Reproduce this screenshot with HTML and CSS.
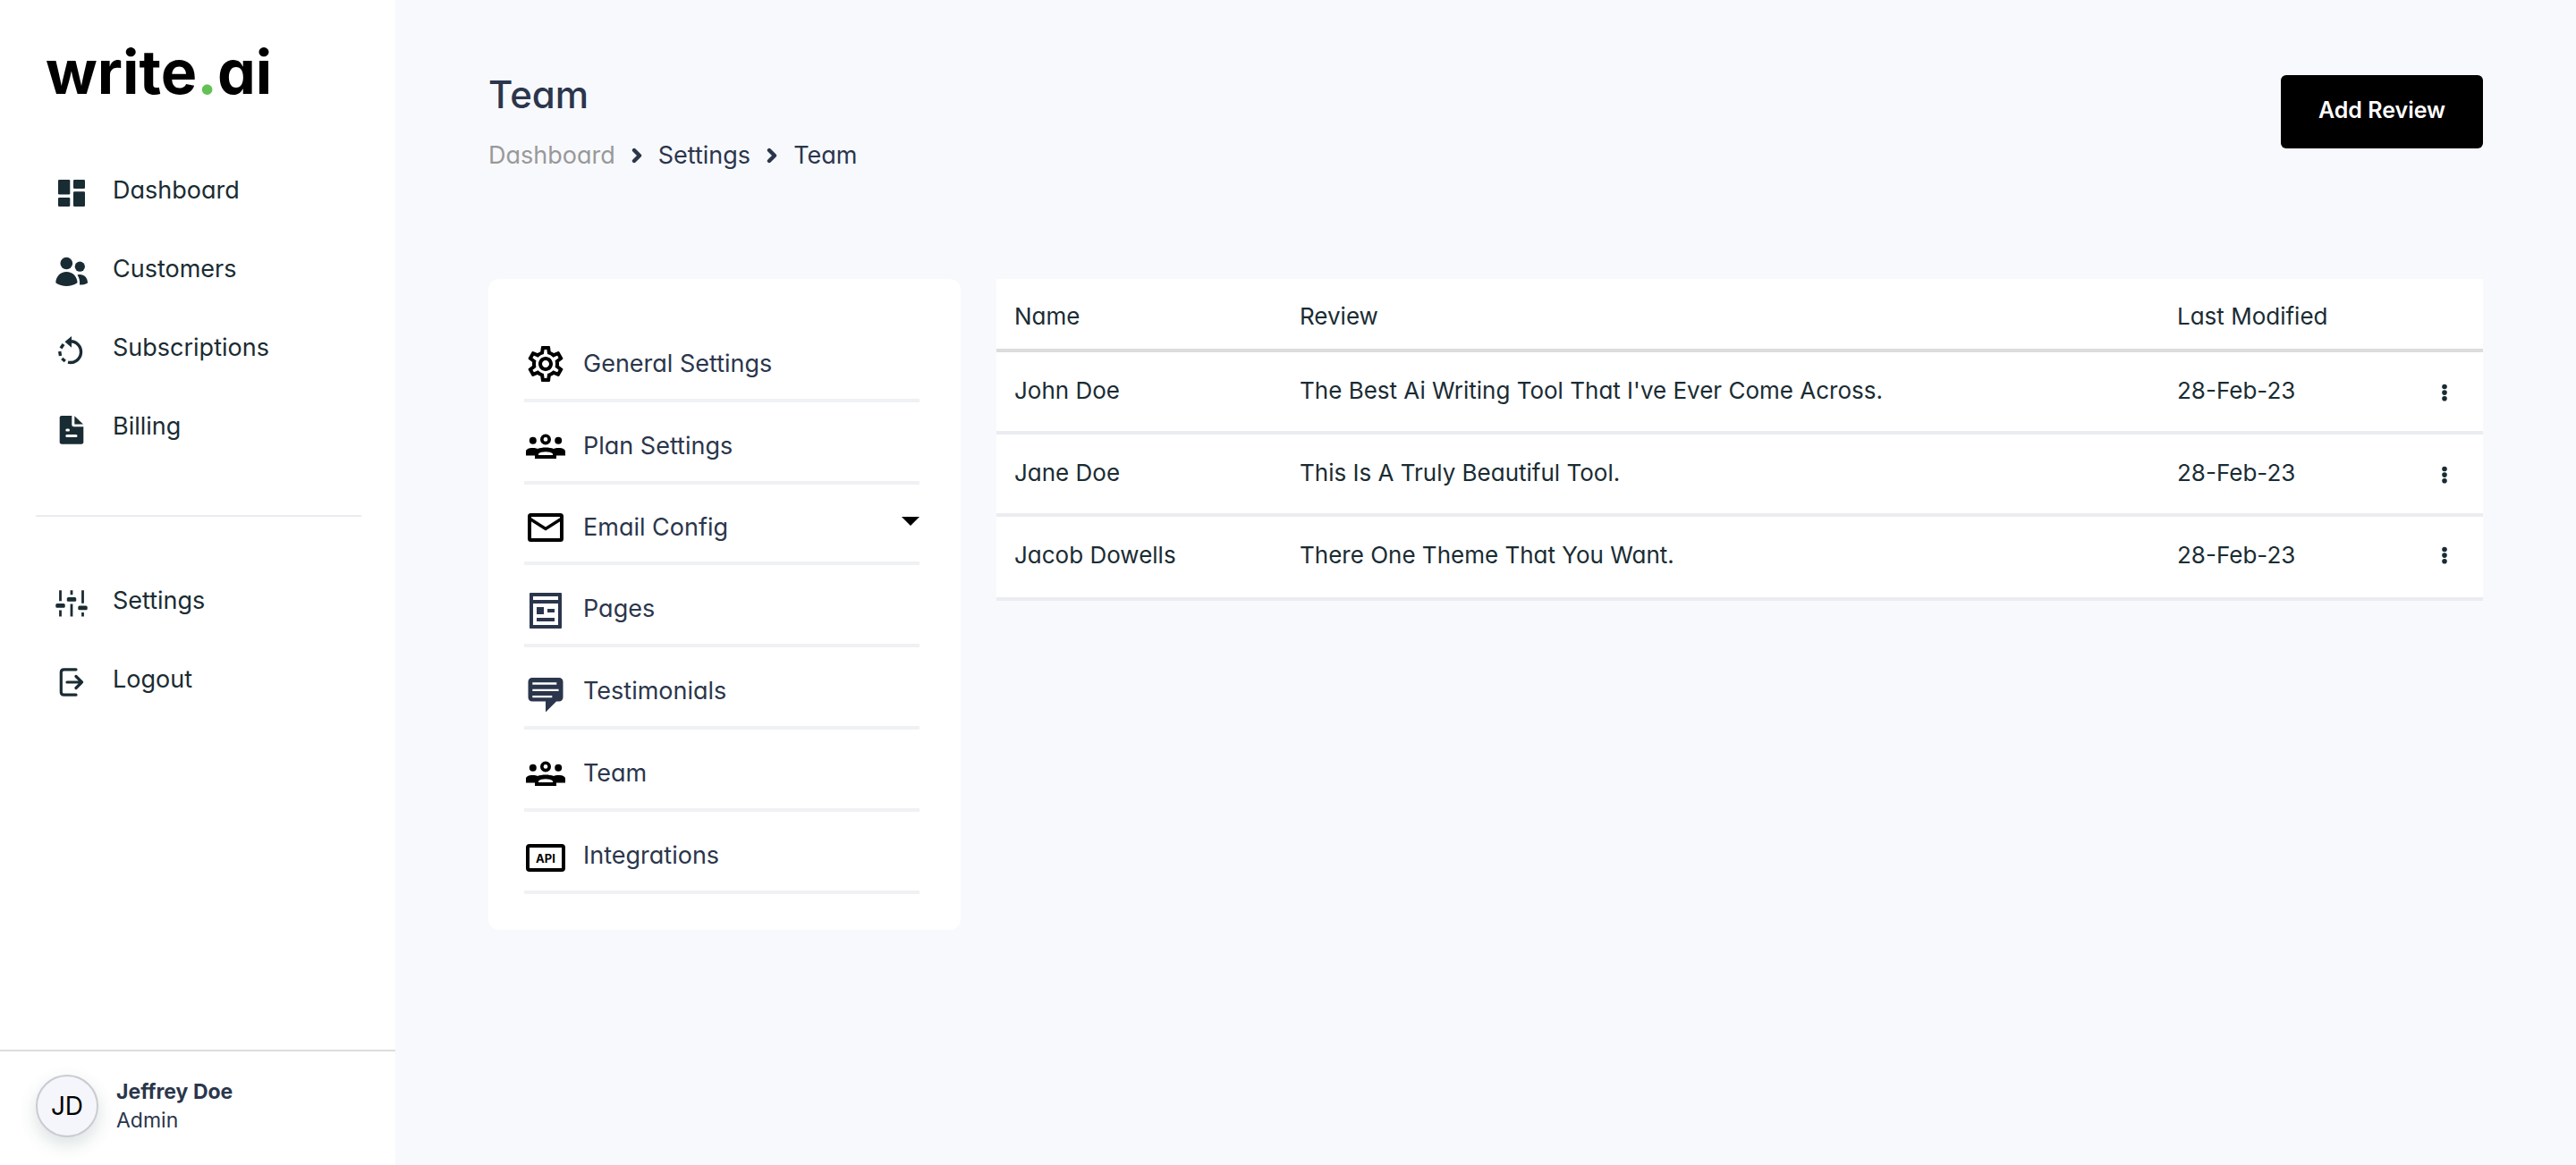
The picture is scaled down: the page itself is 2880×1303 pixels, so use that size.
FILE: index.html
```html
<!DOCTYPE html>
<html lang="en">
<head>
<meta charset="utf-8">
<meta name="viewport" content="width=device-width, initial-scale=1">
<title>Team - write.ai</title>
<link rel="stylesheet" href="styles.css">
</head>
<body>
<svg class="sprite" aria-hidden="true">
  <symbol id="groups" viewBox="0 0 48 48">
    <circle cx="9.8" cy="17.8" r="4"/><circle cx="38.2" cy="17.8" r="4"/>
    <circle cx="24" cy="16.4" r="4.2" fill="none" stroke="currentColor" stroke-width="3.6"/>
    <path fill-rule="evenodd" d="M2 34.5V30c0-2.500 3-4 7.500-4 2.500 0 4 .3 5.500 1 2.500-1 5.500-1.500 9-1.500s6.500.5 9 1.500c1.500-.7 3-1 5.500-1 4.500 0 7.500 1.500 7.500 4v4.500H36V38H12v-3.500zM16 34h16v-1.500c-1.500-1.600-4.500-2.300-8-2.300s-6.500.7-8 2.300z"/>
  </symbol>
  <symbol id="chevron" viewBox="0 0 12 18">
    <path d="M3 3l6 6-6 6" fill="none" stroke="currentColor" stroke-width="4.400" stroke-linecap="round" stroke-linejoin="round"/>
  </symbol>
  <symbol id="dots" viewBox="0 0 24 24">
    <circle cx="12" cy="5.500" r="2.800"/><circle cx="12" cy="12.100" r="2.800"/><circle cx="12" cy="18.700" r="2.800"/>
  </symbol>
</svg>

<aside class="sidebar">
  <a class="logo" href="#">write<span class="logo-dot">.</span>ai</a>
  <nav class="nav" aria-label="Main">
    <a class="nav-link" href="#">
      <svg class="nav-icon" viewBox="0 0 40 40" aria-hidden="true"><rect x="5" y="5" width="13.300" height="16.500" rx="1.200"/><rect x="5" y="25" width="13.300" height="10" rx="1.200"/><rect x="22" y="5" width="13" height="10" rx="1.200"/><rect x="22" y="18.300" width="13" height="16.700" rx="1.200"/></svg>
      Dashboard</a>
    <a class="nav-link" href="#">
      <svg class="nav-icon" viewBox="0 0 40 40" aria-hidden="true"><circle cx="14.300" cy="10.500" r="6.800"/><circle cx="29.300" cy="14.200" r="5.600"/><path d="M14.300 20C7.500 20 2.300 25.500 2.300 32.300 6 35 10 36 14.300 36s8.500-1 12.200-3.700C26.500 25.500 21.200 20 14.300 20z"/><path d="M26.500 23.500c6-1.800 11.500 2 11.500 9-2.500 1.600-5.500 2.100-9 2.100.4-4.300-.3-8-2.500-11.100z"/></svg>
      Customers</a>
    <a class="nav-link" href="#">
      <svg class="nav-icon" viewBox="0 0 40 40" aria-hidden="true"><path d="M12.500 10.200 20 4v12.800z"/><g fill="none" stroke="currentColor" stroke-width="3.400"><path d="M18.500 9.700A11.900 11.900 0 1 1 16 33.200"/><path d="M8 17.500l3-4.500M6.700 21l.8 5M9.300 29l3.500 3"/></g></svg>
      Subscriptions</a>
    <a class="nav-link" href="#">
      <svg class="nav-icon" viewBox="0 0 40 40" aria-hidden="true"><path fill-rule="evenodd" d="M9 5h11.300v10c0 1.300.8 2.200 2.200 2.200h10.800v17.300c0 1.300-.9 2.200-2.200 2.200H9c-1.400 0-2.300-.9-2.300-2.200V7.200C6.700 5.900 7.600 5 9 5zm5.800 14.500a1.500 1.500 0 0 0 0 3h1.700a1.500 1.500 0 0 0 0-3zm0 6.500a1.500 1.500 0 0 0 0 3H25a1.500 1.500 0 0 0 0-3z"/><path d="M23.300 5.200v9.300H33z"/></svg>
      Billing</a>
  </nav>
  <hr class="divider">
  <nav class="nav" aria-label="Account">
    <a class="nav-link" href="#">
      <svg class="nav-icon" viewBox="0 0 40 40" aria-hidden="true"><g fill="none" stroke="currentColor" stroke-width="2.800"><path d="M7.500 5.200v12M7.500 27.500v7M20 5.200v5M20 20.500v14M32.500 5.200v14.500M32.500 30v4.500"/></g><rect x="2.300" y="20" width="10.400" height="4.800" rx="1.500"/><rect x="14.800" y="13" width="10.400" height="4.800" rx="1.500"/><rect x="27.300" y="22.500" width="10.400" height="4.800" rx="1.500"/></svg>
      Settings</a>
    <a class="nav-link" href="#">
      <svg class="nav-icon" viewBox="0 0 40 40" aria-hidden="true"><g fill="none" stroke="currentColor" stroke-width="3.200" stroke-linecap="round" stroke-linejoin="round"><path d="M25 5.800H11.500c-2 0-3.200 1.200-3.200 3.200v22c0 2 1.200 3.200 3.200 3.200H25M15 20h16.500M25 13.500l6.500 6.500-6.500 6.500"/></g></svg>
      Logout</a>
  </nav>
  <div class="user">
    <span class="avatar">JD</span>
    <div class="user-text">
      <div class="user-name">Jeffrey Doe</div>
      <div>Admin</div>
    </div>
  </div>
</aside>

<main class="main">
  <header class="page-head">
    <div>
      <h1 class="title">Team</h1>
      <nav class="crumbs" aria-label="Breadcrumb">
        <a class="crumb crumb-root" href="#">Dashboard</a>
        <svg class="crumb-sep" aria-hidden="true"><use href="#chevron"/></svg>
        <a class="crumb" href="#">Settings</a>
        <svg class="crumb-sep" aria-hidden="true"><use href="#chevron"/></svg>
        <span class="crumb">Team</span>
      </nav>
    </div>
    <button class="add-button" type="button">Add Review</button>
  </header>

  <div class="content">
    <nav class="settings" aria-label="Settings">
      <a class="item" href="#">
        <svg class="item-icon item-icon-black" viewBox="0 0 24 24" aria-hidden="true"><path d="M19.430 12.980c.040-.320.070-.640.070-.980s-.030-.660-.070-.980l2.110-1.650c.190-.150.240-.420.120-.640l-2-3.460c-.090-.160-.260-.250-.440-.250-.060 0-.120.010-.170.030l-2.490 1c-.520-.400-1.080-.730-1.690-.980l-.380-2.650C14.460 2.180 14.250 2 14 2h-4c-.250 0-.460.180-.490.420l-.380 2.650c-.610.250-1.170.590-1.690.980l-2.490-1c-.060-.020-.120-.030-.180-.030-.170 0-.340.090-.430.250l-2 3.460c-.130.220-.070.490.120.640l2.110 1.650c-.040.320-.070.650-.070.980s.030.660.070.980l-2.110 1.650c-.190.150-.240.420-.120.640l2 3.460c.090.160.260.250.440.250.060 0 .120-.010.170-.030l2.490-1c.520.400 1.080.730 1.690.980l.380 2.650c.030.240.240.420.490.420h4c.250 0 .460-.180.490-.420l.380-2.650c.610-.250 1.170-.590 1.690-.980l2.490 1c.060.020.120.030.180.030.170 0 .340-.090.430-.250l2-3.460c.120-.220.070-.490-.120-.640l-2.110-1.650zm-1.980-1.710c.040.310.050.520.050.730s-.020.430-.050.730l-.140 1.130.890.700 1.080.840-.700 1.210-1.270-.510-1.040-.420-.900.680c-.430.320-.840.560-1.250.730l-1.060.430-.160 1.130-.200 1.350h-1.400l-.190-1.350-.160-1.130-1.060-.430c-.430-.180-.830-.410-1.230-.710l-.910-.700-1.060.430-1.270.510-.700-1.210 1.080-.840.890-.700-.140-1.130c-.030-.310-.050-.540-.050-.740s.020-.430.050-.730l.140-1.130-.890-.700-1.080-.840.700-1.210 1.270.510 1.040.420.900-.680c.430-.320.840-.560 1.250-.730l1.060-.430.160-1.130.200-1.350h1.390l.190 1.350.160 1.130 1.060.430c.430.180.830.410 1.230.710l.910.700 1.060-.430 1.270-.510.700 1.210-1.070.850-.890.700.140 1.130zM12 8c-2.210 0-4 1.790-4 4s1.790 4 4 4 4-1.790 4-4-1.790-4-4-4zm0 6c-1.100 0-2-.900-2-2s.900-2 2-2 2 .900 2 2-.900 2-2 2z"/></svg>
        General Settings</a>
      <a class="item" href="#">
        <svg class="item-icon item-icon-black" aria-hidden="true"><use href="#groups"/></svg>
        Plan Settings</a>
      <a class="item item-parent" href="#">
        <svg class="item-icon item-icon-black" viewBox="0 0 48 48" aria-hidden="true"><g fill="none" stroke="currentColor"><rect x="6" y="10" width="36" height="28" rx="1.500" stroke-width="4"/><path d="M6 14l18 11.500L42 14" stroke-width="3.400"/></g></svg>
        Email Config
        <svg class="caret" viewBox="0 0 20 10" aria-hidden="true"><path d="M0 0h20L10 10z"/></svg></a>
      <a class="item" href="#">
        <svg class="item-icon" viewBox="0 0 48 48" aria-hidden="true"><path fill-rule="evenodd" d="M7 6h34a1 1 0 0 1 1 1v38a1 1 0 0 1-1 1H7a1 1 0 0 1-1-1V7a1 1 0 0 1 1-1zm3 4v4h28v-4zm0 8v24h28V18zm4 4h8v8h-8zm12 2h8v4h-8zM14 34h20v4H14z"/></svg>
        Pages</a>
      <a class="item" href="#">
        <svg class="item-icon" viewBox="0 0 48 48" aria-hidden="true"><path fill-rule="evenodd" d="M9 9h30c2.600 0 4.500 1.900 4.500 4.500V31c0 2.600-1.900 4.500-4.500 4.500h-3L24 47.500v-12H9c-2.600 0-4.500-1.900-4.500-4.500V13.500C4.500 10.900 6.400 9 9 9zm.3 5.300v2.400h27v-2.400zm0 7.500v2.200h29.300v-2.200zm0 7.200v2.200h22V29z"/></svg>
        Testimonials</a>
      <a class="item" href="#">
        <svg class="item-icon item-icon-black" aria-hidden="true"><use href="#groups"/></svg>
        Team</a>
      <a class="item" href="#">
        <svg class="item-icon item-icon-black" viewBox="0 0 48 48" aria-hidden="true"><rect x="4" y="13" width="40" height="27" rx="2" fill="none" stroke="currentColor" stroke-width="4"/><text class="api" x="24" y="32" text-anchor="middle">API</text></svg>
        Integrations</a>
    </nav>

    <table class="reviews">
      <colgroup><col class="col-name"><col><col class="col-date"><col class="col-menu"></colgroup>
      <thead>
        <tr><th scope="col">Name</th><th scope="col">Review</th><th scope="col">Last Modified</th><td></td></tr>
      </thead>
      <tbody>
        <tr><td>John Doe</td><td>The Best Ai Writing Tool That I've Ever Come Across.</td><td>28-Feb-23</td><td class="menu-cell"><button class="menu" type="button" aria-label="Actions for John Doe"><svg class="menu-icon" aria-hidden="true"><use href="#dots"/></svg></button></td></tr>
        <tr><td>Jane Doe</td><td>This Is A Truly Beautiful Tool.</td><td>28-Feb-23</td><td class="menu-cell"><button class="menu" type="button" aria-label="Actions for Jane Doe"><svg class="menu-icon" aria-hidden="true"><use href="#dots"/></svg></button></td></tr>
        <tr><td>Jacob Dowells</td><td>There One Theme That You Want.</td><td>28-Feb-23</td><td class="menu-cell"><button class="menu" type="button" aria-label="Actions for Jacob Dowells"><svg class="menu-icon" aria-hidden="true"><use href="#dots"/></svg></button></td></tr>
      </tbody>
    </table>
  </div>
</main>
</body>
</html>
```
FILE: styles.css
```css
* {
  box-sizing: border-box;
}

body {
  margin: 0;
  min-height: 100vh;
  display: flex;
  background: #f8f9fd;
  color: #2b364c;
  font-family: Inter, "Liberation Sans", sans-serif;
  font-size: 27px;
  line-height: 40px;
  /* single-storey a */
  font-feature-settings: "cv11";
}

a {
  color: inherit;
  text-decoration: none;
}

svg {
  fill: currentColor;
  flex: none;
}

button {
  font: inherit;
  font-feature-settings: inherit;
  border: 0;
  cursor: pointer;
}

.sprite {
  position: absolute;
  width: 0;
  height: 0;
}

/* Sidebar */

.sidebar {
  flex: none;
  width: 442px;
  display: flex;
  flex-direction: column;
  background: #fff;
  color: #1a2c33;
}

.logo {
  margin: 40px 0 49px 51px;
  color: #000;
  font-size: 68px;
  font-weight: 700;
  line-height: 80px;
}

.logo-dot {
  color: #62c254;
}

.nav-link {
  display: flex;
  align-items: center;
  gap: 26px;
  height: 88px;
  padding-left: 60px;
}

.nav-icon {
  width: 40px;
  height: 40px;
  margin-top: 6px;
}

.divider {
  width: 364px;
  height: 2px;
  margin: 55px 38px 50px 40px;
  border: 0;
  background: #ebebf0;
}

.user {
  display: flex;
  align-items: center;
  gap: 20px;
  margin-top: auto;
  padding: 26px 40px 31px;
  border-top: 2px solid #ddd;
  color: #2b364c;
}

.avatar {
  display: flex;
  align-items: center;
  justify-content: center;
  width: 70px;
  height: 70px;
  border: 2px solid #c9cbd0;
  border-radius: 50%;
  background: #f5f6fb;
  box-shadow: 0 8px 20px rgba(26, 60, 60, 0.16);
  color: #000;
  font-size: 28px;
}

.user-text {
  font-size: 23px;
  line-height: 32px;
}

.user-name {
  font-weight: 700;
}

/* Page */

.main {
  flex: 1;
  min-width: 0;
  padding: 84px 104px;
}

.page-head {
  display: flex;
  align-items: flex-start;
  justify-content: space-between;
}

.title {
  margin: 0 0 26px;
  font-size: 42px;
  font-weight: 500;
  line-height: 44px;
}

.crumbs {
  display: flex;
  align-items: center;
  gap: 18px;
}

.crumb-root {
  color: #999;
}

.crumb-sep {
  width: 12px;
  height: 18px;
}

.add-button {
  width: 226px;
  height: 82px;
  padding: 0 0 4px;
  border-radius: 6px;
  background: #000;
  color: #fff;
  font-size: 25px;
  font-weight: 600;
}

.content {
  display: grid;
  grid-template-columns: 528px minmax(0, 1fr);
  align-items: start;
  gap: 40px;
  margin-top: 118px;
}

/* Settings menu */

.settings {
  padding: 46px 46px 40px 40px;
  border-radius: 12px;
  background: #fff;
}

.item {
  display: flex;
  align-items: center;
  gap: 18px;
  height: 92px;
  padding-top: 9px;
  border-bottom: 4px solid #f0f1f5;
}

.item-parent {
  height: 90px;
}

.item-icon {
  width: 48px;
  height: 48px;
}

.item-icon-black {
  color: #000;
}

.api {
  font-size: 13px;
  font-weight: 700;
}

.caret {
  width: 20px;
  height: 10px;
  margin: 0 0 14px auto;
  color: #000;
}

/* Reviews table */

.reviews {
  width: 100%;
  table-layout: fixed;
  border-spacing: 0;
  background: #fff;
  color: #1a2c33;
  font-size: 26px;
}

.col-name {
  width: 319px;
}

.col-date {
  width: 275px;
}

.col-menu {
  width: 87px;
}

.reviews th,
.reviews td {
  height: 92px;
  padding: 0 20px 3px;
  border-bottom: 4px solid #ebecf1;
  font-weight: 400;
  text-align: left;
}

.reviews thead th,
.reviews thead td {
  height: 82px;
  padding-top: 9px;
  border-bottom-color: #dcdcdc;
}

.reviews tbody tr:last-child td {
  height: 94px;
  padding-bottom: 5px;
}

.reviews .menu-cell {
  padding: 0;
  text-align: center;
}

.menu {
  display: inline-flex;
  padding: 8px;
  background: none;
  color: inherit;
  vertical-align: middle;
}

.menu-icon {
  width: 24px;
  height: 24px;
}
```
